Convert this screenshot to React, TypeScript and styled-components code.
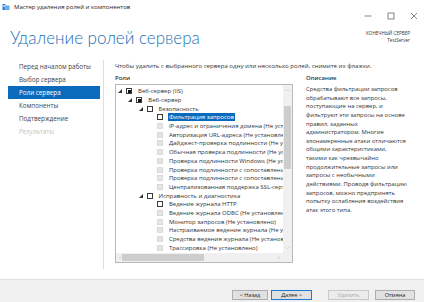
import React from "react";
import styled, { createGlobalStyle } from "styled-components";

const Global = createGlobalStyle`
  html, body { margin: 0; padding: 0; background: #fff; }
  body { width: 424px; height: 302px; overflow: hidden; font-family: "Open Sans", "Noto Sans", sans-serif; color: #333; }
  * { box-sizing: border-box; }
`;

const Window = styled.div`
  width: 424px;
  height: 302px;
  display: flex;
  flex-direction: column;
  background: #fff;
`;

const TitleBar = styled.div`
  height: 22px;
  display: flex;
  align-items: flex-start;
  padding: 3px 0 0 2px;
`;

const TitleText = styled.div`
  font-size: 6px;
  line-height: 8px;
  color: #222;
  margin-left: 4px;
  flex: 1;
`;

const Controls = styled.div`
  display: flex;
  align-items: center;
  height: 10px;
  margin-top: 8px;
  margin-right: 6px;
  gap: 15px;
`;

const Header = styled.div`
  height: 36px;
  display: flex;
  justify-content: space-between;
  align-items: flex-start;
  padding: 6px 14px 0 10px;
`;

const PageTitle = styled.div`
  font-family: "Lato", "Open Sans", sans-serif;
  font-size: 17px;
  font-weight: 300;
  line-height: 20px;
  color: #1c6fb6;
`;

const ServerInfo = styled.div`
  text-align: right;
  font-size: 4.6px;
  line-height: 7px;
  color: #333;
  padding-top: 2px;
`;

const Body = styled.div`
  flex: 1;
  display: flex;
  padding-bottom: 10px;
`;

const NavWrap = styled.div`
  width: 104px;
  border-right: 1px solid #dedede;
  padding: 0 3px 0 8px;
  margin-top: 2px;
  display: flex;
  flex-direction: column;
`;

const NavItem = styled.div<{ $active?: boolean; $disabled?: boolean }>`
  height: 13px;
  line-height: 13px;
  padding-left: 11px;
  font-size: 6.3px;
  color: ${(p) => (p.$active ? "#fff" : p.$disabled ? "#c4c4c4" : "#444")};
  background: ${(p) => (p.$active ? "#0a6bbd" : "transparent")};
  white-space: nowrap;
`;

const Main = styled.div`
  flex: 1;
  padding: 0 0 0 11px;
  display: flex;
  flex-direction: column;
`;

const Intro = styled.div`
  font-size: 6.1px;
  line-height: 8px;
  color: #333;
  height: 12px;
  margin-top: 4px;
  white-space: nowrap;
`;

const Columns = styled.div`
  display: flex;
  gap: 13px;
  flex: 1;
`;

const RolesCol = styled.div`
  width: 178px;
  display: flex;
  flex-direction: column;
`;

const Label = styled.div`
  font-size: 6px;
  line-height: 8px;
  height: 10px;
  color: #333;
  font-weight: 600;
`;

const TreeBox = styled.div`
  border: 1px solid #b9b9b9;
  height: 179px;
  display: grid;
  grid-template-columns: 1fr 9px;
  grid-template-rows: 1fr 9px;
  overflow: hidden;
`;

const TreeArea = styled.div`
  overflow: hidden;
  padding-top: 2px;
`;

const Row = styled.div<{ $level: number }>`
  height: 8.7px;
  display: flex;
  align-items: center;
  padding-left: ${(p) => p.$level * 10.3}px;
  white-space: nowrap;
  font-size: 6px;
  color: #333;
`;

const Expander = styled.div`
  width: 8px;
  height: 8px;
  display: flex;
  align-items: center;
  justify-content: center;
  flex-shrink: 0;
`;

const Check = styled.div<{ $state: "empty" | "mixed" | "disabled" }>`
  width: 6px;
  height: 6px;
  margin-left: 2px;
  flex-shrink: 0;
  border: 1px solid ${(p) => (p.$state === "disabled" ? "#dadada" : "#3a3a3a")};
  background: ${(p) => (p.$state === "disabled" ? "#e4e4e4" : "#fff")};
  display: flex;
  align-items: center;
  justify-content: center;
  &::after {
    content: "";
    display: ${(p) => (p.$state === "mixed" ? "block" : "none")};
    width: 3px;
    height: 3px;
    background: #111;
  }
`;

const RowText = styled.span<{ $selected?: boolean }>`
  margin-left: 5px;
  padding: 0 1px;
  line-height: 8px;
  background: ${(p) => (p.$selected ? "#0a6bbd" : "transparent")};
  color: ${(p) => (p.$selected ? "#fff" : "#333")};
`;

const VScroll = styled.div`
  background: #f0f0f0;
  display: flex;
  flex-direction: column;
  align-items: center;
  justify-content: space-between;
  position: relative;
`;

const HScroll = styled.div`
  background: #f0f0f0;
  display: flex;
  align-items: center;
  justify-content: space-between;
  padding: 0 3px;
`;

const Corner = styled.div`
  background: #f0f0f0;
`;

const Arrow = styled.div`
  font-size: 5px;
  line-height: 9px;
  height: 9px;
  color: #a0a0a0;
  font-family: "DejaVu Sans", sans-serif;
`;

const VThumb = styled.div`
  position: absolute;
  left: 1px;
  right: 1px;
  top: 21px;
  height: 63px;
  background: #cdcdcd;
`;

const HThumb = styled.div`
  flex: 0 0 82px;
  height: 7px;
  background: #cdcdcd;
  margin-left: 1px;
  margin-right: auto;
`;

const DescCol = styled.div`
  width: 108px;
  display: flex;
  flex-direction: column;
`;

const DescText = styled.div`
  font-size: 5.9px;
  line-height: 8.62px;
  color: #333;
  margin-top: 1px;
  white-space: nowrap;
`;

const Footer = styled.div`
  height: 23px;
  border-top: 1px solid #dfdfdf;
  background: #f0f0f0;
  display: flex;
  justify-content: flex-end;
  align-items: flex-start;
  padding: 10px 9px 0 0;
`;

const Btn = styled.div<{ $w: number; $primary?: boolean; $disabled?: boolean; $gap?: number }>`
  width: ${(p) => p.$w}px;
  height: 10px;
  margin-left: ${(p) => p.$gap ?? 3}px;
  border: 1px solid ${(p) => (p.$primary ? "#1a7ad4" : p.$disabled ? "#c8c8c8" : "#adadad")};
  background: ${(p) => (p.$disabled ? "#ececec" : "#e1e1e1")};
  color: ${(p) => (p.$disabled ? "#a8a8a8" : "#222")};
  font-size: 5.5px;
  line-height: 8px;
  text-align: center;
  white-space: nowrap;
`;

type R = { l: number; s: "empty" | "mixed" | "disabled"; t: string; exp?: boolean; sel?: boolean };

const rows: R[] = [
  { l: 0, s: "mixed", t: "Веб-сервер (IIS)", exp: true },
  { l: 1, s: "mixed", t: "Веб-сервер", exp: true },
  { l: 2, s: "empty", t: "Безопасность", exp: true },
  { l: 3, s: "empty", t: "Фильтрация запросов", sel: true },
  { l: 3, s: "disabled", t: "IP-адрес и ограничения домена (Не установлено)" },
  { l: 3, s: "disabled", t: "Авторизация URL-адреса (Не установлено)" },
  { l: 3, s: "disabled", t: "Дайджест-проверка подлинности (Не установлено)" },
  { l: 3, s: "disabled", t: "Обычная проверка подлинности (Не установлено)" },
  { l: 3, s: "disabled", t: "Проверка подлинности Windows (Не установлено)" },
  { l: 3, s: "disabled", t: "Проверка подлинности с сопоставлением сертификата клиента" },
  { l: 3, s: "disabled", t: "Проверка подлинности с сопоставлением сертификата клиента IIS" },
  { l: 3, s: "disabled", t: "Централизованная поддержка SSL-сертификатов (Не установлено)" },
  { l: 2, s: "empty", t: "Исправность и диагностика", exp: true },
  { l: 3, s: "empty", t: "Ведение журнала HTTP" },
  { l: 3, s: "disabled", t: "Ведение журнала ODBC (Не установлено)" },
  { l: 3, s: "disabled", t: "Монитор запросов (Не установлено)" },
  { l: 3, s: "disabled", t: "Настраиваемое ведение журнала (Не установлено)" },
  { l: 3, s: "disabled", t: "Средства ведения журнала (Не установлено)" },
  { l: 3, s: "disabled", t: "Трассировка (Не установлено)" },
];

const Tri = () => (
  <svg width="4" height="4" viewBox="0 0 4 4">
    <polygon points="4,0 4,4 0,4" fill="#333" />
  </svg>
);

const AppIcon = () => (
  <svg width="8" height="8" viewBox="0 0 8 8">
    <rect x="0.5" y="1" width="3" height="6" fill="#2a7fd0" />
    <rect x="4" y="2.5" width="3.5" height="4.5" fill="#6aa9e4" />
    <rect x="1" y="2" width="2" height="0.6" fill="#fff" />
    <rect x="1" y="3.4" width="2" height="0.6" fill="#fff" />
  </svg>
);

const CtrlIcon = ({ kind }: { kind: "min" | "max" | "close" }) => (
  <svg width="8" height="8" viewBox="0 0 8 8" fill="none" stroke="#555" strokeWidth="0.7">
    {kind === "min" && <line x1="0.5" y1="4" x2="7.5" y2="4" />}
    {kind === "max" && <rect x="1" y="1" width="6" height="6" />}
    {kind === "close" && (
      <>
        <line x1="1" y1="1" x2="7" y2="7" />
        <line x1="7" y1="1" x2="1" y2="7" />
      </>
    )}
  </svg>
);

const desc = [
  "Средства фильтрации запросов",
  "обрабатывают все запросы,",
  "поступающие на сервер, и",
  "фильтруют эти запросы на основе",
  "правил, заданных",
  "администратором. Многие",
  "злонамеренные атаки отличаются",
  "общими характеристиками,",
  "такими как чрезвычайно",
  "продолжительные запросы или",
  "запросы с необычными",
  "действиями. Проводя фильтрацию",
  "запросов, можно предпринять",
  "попытку ослабления воздействия",
  "атак этого типа.",
];

export default function App() {
  return (
    <Window>
      <Global />
      <TitleBar>
        <AppIcon />
        <TitleText>Мастер удаления ролей и компонентов</TitleText>
        <Controls>
          <CtrlIcon kind="min" />
          <CtrlIcon kind="max" />
          <CtrlIcon kind="close" />
        </Controls>
      </TitleBar>
      <Header>
        <PageTitle>Удаление ролей сервера</PageTitle>
        <ServerInfo>
          <div>КОНЕЧНЫЙ СЕРВЕР</div>
          <div>TestServer</div>
        </ServerInfo>
      </Header>
      <Body>
        <NavWrap>
          <NavItem>Перед началом работы</NavItem>
          <NavItem>Выбор сервера</NavItem>
          <NavItem $active>Роли сервера</NavItem>
          <NavItem>Компоненты</NavItem>
          <NavItem>Подтверждение</NavItem>
          <NavItem $disabled>Результаты</NavItem>
        </NavWrap>
        <Main>
          <Intro>Чтобы удалить с выбранного сервера одну или несколько ролей, снимите их флажки.</Intro>
          <Columns>
            <RolesCol>
              <Label>Роли</Label>
              <TreeBox>
                <TreeArea>
                  {rows.map((r, i) => (
                    <Row key={i} $level={r.l}>
                      <Expander>{r.exp ? <Tri /> : null}</Expander>
                      <Check $state={r.s} />
                      <RowText $selected={r.sel}>{r.t}</RowText>
                    </Row>
                  ))}
                </TreeArea>
                <VScroll>
                  <Arrow>︿</Arrow>
                  <VThumb />
                  <Arrow>﹀</Arrow>
                </VScroll>
                <HScroll>
                  <Arrow>‹</Arrow>
                  <HThumb />
                  <Arrow>›</Arrow>
                </HScroll>
                <Corner />
              </TreeBox>
            </RolesCol>
            <DescCol>
              <Label>Описание</Label>
              <DescText>
                {desc.map((d, i) => (
                  <div key={i}>{d}</div>
                ))}
              </DescText>
            </DescCol>
          </Columns>
        </Main>
      </Body>
      <Footer>
        <Btn $w={36}>&lt; Назад</Btn>
        <Btn $w={41} $primary>Далее &gt;</Btn>
        <Btn $w={41} $disabled $gap={16}>Удалить</Btn>
        <Btn $w={40} $gap={6}>Отмена</Btn>
      </Footer>
    </Window>
  );
}
